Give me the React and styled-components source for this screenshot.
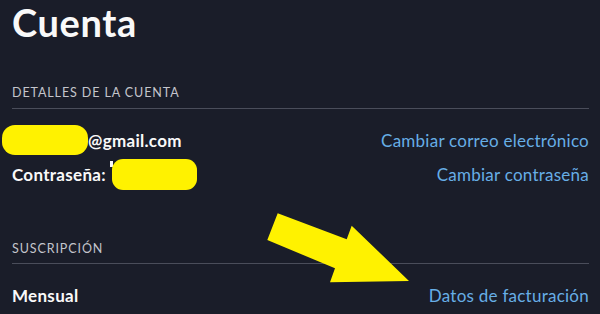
import React from "react";
import styled, { createGlobalStyle } from "styled-components";

const Global = createGlobalStyle`
  html, body { margin: 0; padding: 0; background: #1a1d29; }
  body { font-family: Lato, "Noto Sans", sans-serif; color: #f9f9f9; }
`;

const Page = styled.div`
  position: relative;
  width: 600px;
  height: 314px;
  overflow: hidden;
  box-sizing: border-box;
  padding: 0 11px 0 12px;
  background: #1a1d29;
`;

const Title = styled.h1`
  margin: 0;
  font-size: 38px;
  line-height: 44px;
  font-weight: 700;
  color: #f9f9f9;
  letter-spacing: 0.6px;
`;

const Section = styled.section`
  margin-top: ${(p) => p.$top}px;
`;

const SectionLabel = styled.div`
  font-size: 12.5px;
  line-height: 16px;
  letter-spacing: 0.9px;
  color: #c4c5cc;
  text-transform: uppercase;
  padding-bottom: ${(p) => p.$pad}px;
  border-bottom: 1px solid #4a4d5a;
`;

const List = styled.div`
  padding-top: 14px;
`;

const Row = styled.div`
  height: 34px;
  display: flex;
  align-items: center;
  justify-content: space-between;
`;

const Value = styled.div`
  font-size: 17px;
  font-weight: 700;
  color: #f9f9f9;
  letter-spacing: 0.3px;
  display: flex;
  align-items: center;
  white-space: nowrap;
`;

const Link = styled.a`
  font-size: 17px;
  font-weight: 400;
  color: #67aee6;
  text-decoration: none;
  letter-spacing: 0.25px;
  cursor: pointer;
`;

const Redaction = styled.span`
  display: inline-block;
  width: ${(p) => p.$w}px;
  height: ${(p) => p.$h}px;
  margin-left: ${(p) => p.$ml || 0}px;
  border-radius: ${(p) => p.$r}px;
  background: #fff200;
`;

const Peek = styled.span`
  display: inline-block;
  width: 3px;
  height: 6px;
  margin: 0 -1px 0 4px;
  background: #f9f9f9;
  align-self: flex-start;
  margin-top: 2px;
`;

const ArrowSvg = styled.svg`
  position: absolute;
  left: 0;
  top: 0;
  pointer-events: none;
`;

export default function App() {
  return (
    <>
      <Global />
      <Page>
        <Title>Cuenta</Title>
        <Section $top={41}>
          <SectionLabel $pad={7}>Detalles de la cuenta</SectionLabel>
          <List>
            <Row>
              <Value>
                <Redaction $w={86} $h={30} $r={13} $ml={-10} />
                @gmail.com
              </Value>
              <Link>Cambiar correo electrónico</Link>
            </Row>
            <Row>
              <Value>
                Contraseña:
                <Peek />
                <Redaction $w={85} $h={31} $r={11} />
              </Value>
              <Link>Cambiar contraseña</Link>
            </Row>
          </List>
        </Section>
        <Section $top={50}>
          <SectionLabel $pad={6}>Suscripción</SectionLabel>
          <List>
            <Row>
              <Value>Mensual</Value>
              <Link>Datos de facturación</Link>
            </Row>
          </List>
        </Section>
        <ArrowSvg width="600" height="314" viewBox="0 0 600 314">
          <polygon
            points="277.7,213.3 346.7,239.3 351.7,225.7 409,281 330,282.3 335,268.3 267.3,240"
            fill="#fff200"
          />
        </ArrowSvg>
      </Page>
    </>
  );
}
